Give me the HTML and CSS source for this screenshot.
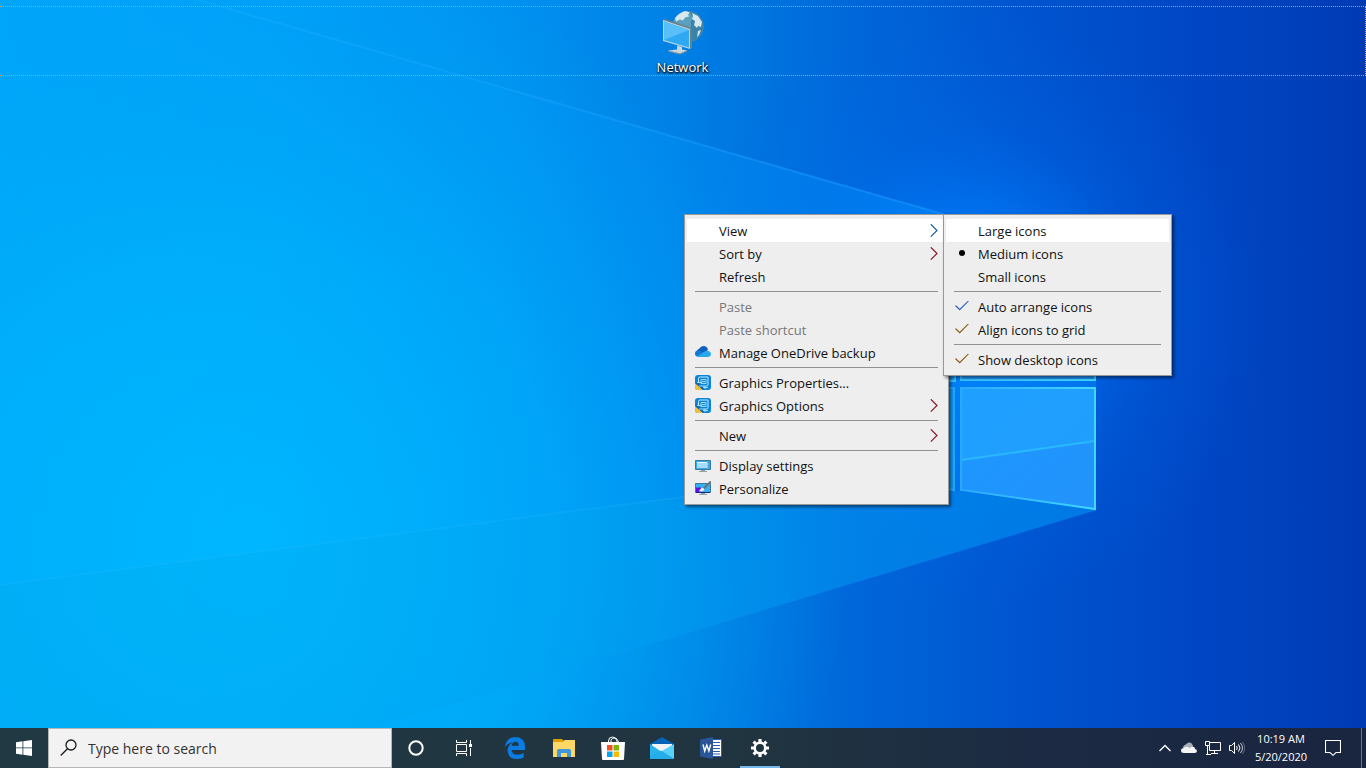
FILE: index.html
```
<!DOCTYPE html>
<html lang="en">
<head>
  <meta charset="UTF-8">
  <meta name="viewport" content="width=device-width, initial-scale=1.0">
  <title>Desktop</title>
  <link rel="stylesheet" href="styles.css">
</head>
<body>

<!-- shared icons -->
<svg class="sprite" aria-hidden="true">
  <symbol id="arrow" viewBox="0 0 8 14">
    <path d="M.8 .3 7 6.500 .8 12.700" fill="none" stroke="currentColor" stroke-width="1.200"/>
  </symbol>
  <symbol id="intel" viewBox="0 0 16 16">
    <rect width="16" height="15" rx="3" fill="#0a84d8"/>
    <path d="M0 8v4q0 3 3 3h5z" fill="#f5c037"/>
    <path d="M8 15 0 8l2-1 7 6z" fill="#1268a8"/>
    <path d="M3.500 8V3.500q0-1.500 1.500-1.500H13v7.500q0 1.500-1.500 1.500H8" fill="none" stroke="#c5ebff"/>
    <path d="M6 4.500h5v4H6zM2 7.500h5M4 11h4M10 11v3M13 12.500H8M7 6.500h3" fill="none" stroke="#9bdcff"/>
  </symbol>
</svg>

<main class="desktop">
  <svg class="wallpaper" viewBox="0 0 1366 728" preserveAspectRatio="none" aria-hidden="true">
    <defs>
      <linearGradient id="base" x1="0" x2="1" y1="0" y2="0">
        <stop offset="0" stop-color="#00a6fb"/>
        <stop offset=".2" stop-color="#009ff9"/>
        <stop offset=".37" stop-color="#0092f0"/>
        <stop offset=".5" stop-color="#007fe4"/>
        <stop offset=".62" stop-color="#0068da"/>
        <stop offset=".75" stop-color="#0054cf"/>
        <stop offset=".88" stop-color="#0046c4"/>
        <stop offset="1" stop-color="#003bb4"/>
      </linearGradient>
      <radialGradient id="cyan" gradientUnits="userSpaceOnUse" cx="250" cy="540" r="600">
        <stop offset="0" stop-color="#00b8ff"/>
        <stop offset=".5" stop-color="#00b2fb" stop-opacity=".7"/>
        <stop offset="1" stop-color="#00a5f0" stop-opacity="0"/>
      </radialGradient>
      <radialGradient id="glow" gradientUnits="userSpaceOnUse" cx="970" cy="310" r="300">
        <stop offset="0" stop-color="#0084ff"/>
        <stop offset=".3" stop-color="#007cfa" stop-opacity=".7"/>
        <stop offset=".6" stop-color="#006ef0" stop-opacity=".25"/>
        <stop offset="1" stop-color="#0062e4" stop-opacity="0"/>
      </radialGradient>
      <linearGradient id="beam" gradientUnits="userSpaceOnUse" x1="150" x2="960" y1="0" y2="0">
        <stop offset="0" stop-color="#00aaff" stop-opacity="0"/>
        <stop offset="1" stop-color="#008cfc" stop-opacity=".75"/>
      </linearGradient>
      <linearGradient id="edge" gradientUnits="userSpaceOnUse" x1="200" x2="960" y1="0" y2="0">
        <stop offset="0" stop-color="#1fb1ff" stop-opacity=".3"/>
        <stop offset="1" stop-color="#1c98ff" stop-opacity=".5"/>
      </linearGradient>
      <linearGradient id="pane" x1="0" x2="1" y1="0" y2="1">
        <stop offset="0" stop-color="#1b98ff"/>
        <stop offset="1" stop-color="#2393fb"/>
      </linearGradient>
      <linearGradient id="rim" x1="0" x2="1" y1="0" y2="0">
        <stop offset="0" stop-color="#2ba8ff"/>
        <stop offset="1" stop-color="#3fd8ff"/>
      </linearGradient>
    </defs>
    <rect width="1366" height="728" fill="url(#base)"/>
    <rect width="1366" height="728" fill="url(#cyan)"/>
    <rect width="1366" height="728" fill="url(#glow)"/>
    <path d="M198 0 1096 258V510L370 728H0V0z" fill="url(#beam)" opacity=".6"/>
    <path d="M198 0 960 219" stroke="url(#edge)" stroke-width="2" fill="none"/>
    <path d="M0 585 955 462V491L1096 510 370 728H0z" fill="#00a8e8" opacity=".2"/>
    <path d="M0 585 955 462" stroke="#35c4ff" stroke-opacity=".15" stroke-width="2" fill="none"/>
    <path d="M1096 510 370 728" stroke="#16a0ff" stroke-opacity=".12" stroke-width="2" fill="none"/>
    <!-- window panes -->
    <path d="M820 275 955 255V381H820zM961 254 1095 232V380H961z" fill="url(#pane)" stroke="url(#rim)" stroke-width="2"/>
    <path d="M820 388H954V490L820 472z" fill="#0f96f2" stroke="#23a6fa" stroke-width="2"/>
    <path d="M961 388H1095V509L961 490z" fill="url(#pane)"/>
    <path d="M961 460 1095 441V388H961z" fill="#22a5ff" opacity=".6"/>
    <path d="M961 460 1095 441" stroke="#2ab8ff" stroke-width="2"/>
    <path d="M961 388H1095V509L961 490z" fill="none" stroke="url(#rim)" stroke-width="2"/>
  </svg>

  <div class="icon-row">
    <a class="desktop-icon" href="#network">
      <svg width="48" height="48" viewBox="0 0 48 48" aria-hidden="true">
        <circle cx="30" cy="19.500" r="15.500" fill="#5a9fbe"/>
        <path d="M30 4a15.500 15.500 0 0 1 15 19.500q-3 9-12 11.400V14q4-4-3-9.500z" fill="#3a82a6"/>
        <path d="M17 11q4-5 10-7l5 1.500-2 2 1 2-4 1-2 3-3-1-4 2zM34 6l6 3 4 6-1 5-3-1-1 2-3-3 1-4-3-2 1-3zM40 24l3-1-2 5-2 2z" fill="#d7e8ee"/>
        <path d="M5 13 7 12 34 21v20l-2 1z" fill="#667f8b"/>
        <path d="M5 13 32 22v20L5 34z" fill="#b9d3df"/>
        <path d="M6 14.500 31 23V40.500L6 33z" fill="#2fa9f3"/>
        <path d="M6 14.500 31 23 6 33z" fill="#58bff9"/>
        <path d="M19 38.500l5 1.500v2.500l5 1-7 3-12-3 9-1z" fill="#cfd6da"/>
        <path d="M10 43.500l12 3 7-3v1L22 47.500 10 44.500z" fill="#8d989e"/>
      </svg>
      <span>Network</span>
    </a>
  </div>

  <div class="menu context-menu">
    <button class="item active">
      <span class="icon"></span>View
      <svg class="arrow blue" width="8" height="14"><use href="#arrow"/></svg>
    </button>
    <button class="item">
      <span class="icon"></span>Sort by
      <svg class="arrow" width="8" height="14"><use href="#arrow"/></svg>
    </button>
    <button class="item"><span class="icon"></span>Refresh</button>
    <hr>
    <button class="item" disabled><span class="icon"></span>Paste</button>
    <button class="item" disabled><span class="icon"></span>Paste shortcut</button>
    <button class="item">
      <svg class="icon" viewBox="0 0 16 16" aria-hidden="true">
        <path d="M2 7Q2 4 4.500 3.500 5.500 1 8.500 1q3.500 0 4.500 3.500L8 10z" fill="#0a5fbd"/>
        <path d="M2.500 11.500Q0 11.500 0 8.500t3-3q3-.5 4.500 1.500L12 11.500z" fill="#1279d3"/>
        <path d="M2 11.500 10 6.200q1-.7 2.500-.5Q16 6.500 16 9t-2.500 3H3z" fill="#28a8ea"/>
      </svg>Manage OneDrive backup
    </button>
    <hr>
    <button class="item"><svg class="icon"><use href="#intel"/></svg>Graphics Properties...</button>
    <button class="item">
      <svg class="icon"><use href="#intel"/></svg>Graphics Options
      <svg class="arrow" width="8" height="14"><use href="#arrow"/></svg>
    </button>
    <hr>
    <button class="item">
      <span class="icon"></span>New
      <svg class="arrow" width="8" height="14"><use href="#arrow"/></svg>
    </button>
    <hr>
    <button class="item">
      <svg class="icon" viewBox="0 0 16 16" aria-hidden="true">
        <path d="M.5 2.500h15v9H.5z" fill="#35aaf0" stroke="#3f7896"/>
        <path d="M2 5h9.500v5H2z" fill="#a8dcff"/>
        <path d="M2 4.500h10V10" fill="none" stroke="#e8f7ff"/>
        <path d="M6 12h4v1H6zM4 13h8v1H4z" fill="#8fa3ad"/>
      </svg>Display settings
    </button>
    <button class="item">
      <svg class="icon" viewBox="0 0 16 16" aria-hidden="true">
        <path d="M.5 2.500h15v9H.5z" fill="#35b2f5" stroke="#3f7896"/>
        <path d="M1 6.500h5v5H1z" fill="#5b12e8"/>
        <path d="M1 11h14v1H1z" fill="#1b2277"/>
        <path d="M4 10.500Q6 6 8.500 7l1 1.500q-1 2.500-5.500 2z" fill="#e9eef0"/>
        <path d="M15.500-.5 8 6.500l1.500 1.800L16.500 1z" fill="#66757d"/>
        <path d="M6 12h4v1H6zM4 13h8v1H4z" fill="#8fa3ad"/>
      </svg>Personalize
    </button>

    <div class="menu submenu">
      <label class="item active"><input type="radio" name="size">Large icons</label>
      <label class="item"><input type="radio" name="size" checked>Medium icons</label>
      <label class="item"><input type="radio" name="size">Small icons</label>
      <hr>
      <label class="item"><input type="checkbox" class="blue" checked>Auto arrange icons</label>
      <label class="item"><input type="checkbox" checked>Align icons to grid</label>
      <hr>
      <label class="item"><input type="checkbox" checked>Show desktop icons</label>
    </div>
  </div>
</main>

<footer class="taskbar">
  <button class="task" aria-label="Start">
    <svg width="16" height="16" viewBox="0 0 16 16" fill="#fff">
      <path d="M0 2.200 6.500 1.300V7.500H0zM7.300 1.200 16 0V7.500H7.300zM0 8.300H6.500V14.700L0 13.800zM7.300 8.300H16V16L7.300 14.800z"/>
    </svg>
  </button>
  <label class="search">
    <svg width="18" height="18" viewBox="0 0 18 18" fill="none" stroke="#1c1c1c" stroke-width="1.300" aria-hidden="true">
      <circle cx="11" cy="6" r="5"/>
      <path d="M7.500 9.700 .7 16.500"/>
    </svg>
    <input type="text" placeholder="Type here to search" aria-label="Search">
  </label>
  <button class="task" aria-label="Cortana">
    <svg width="16" height="16" viewBox="0 0 16 16"><circle cx="8" cy="8" r="6.700" fill="none" stroke="#fff" stroke-width="2"/></svg>
  </button>
  <button class="task" aria-label="Task View">
    <svg width="16" height="16" viewBox="0 0 16 16" fill="none" stroke="#fff">
      <path d="M.5 0v2.500h10V0M.5 16v-2.500h10V16M.5 4.500h10v7H.5zM14.500 0v4M14.500 8v8"/>
      <path d="M13 4h3v3h-3z" fill="#fff" stroke="none"/>
    </svg>
  </button>

  <nav class="pinned">
    <button class="task" aria-label="Edge">
      <svg width="20" height="22" viewBox="0 0 20 22">
        <path d="M0 10Q1.500 0 10.500 0 20 .5 20 10v3H6.500q.5 4.500 6 4.800 3.500 0 6.200-1.800v4.500Q15.500 22 12 22 3 22 2.500 13.500 2.500 8.500 7.500 5.500 3 6 0 10zM6.700 8.800h7q0-4-3.300-4-3 .2-3.700 4z" fill="#0a7be0"/>
      </svg>
    </button>
    <button class="task" aria-label="File Explorer">
      <svg width="22" height="18" viewBox="0 0 22 18">
        <path d="M0 1q0-1 1-1h8l2 2v2H0z" fill="#e0a000"/>
        <path d="M0 3h10l1.500-2H22v17H0z" fill="#ffd766"/>
        <path d="M4 18v-6q0-2 2-2h10q2 0 2 2v6h-4v-4H8v4z" fill="#3f97dc"/>
      </svg>
    </button>
    <button class="task" aria-label="Store">
      <svg width="24" height="24" viewBox="0 0 24 24">
        <path d="M7.500 7V5q0-4 4-4 3.500 0 4.500 4v2M10 7V4q1-2 3-2 4 0 4.500 5" fill="none" stroke="#fff"/>
        <path d="M0 6h24l-1 17q0 1-1 1H2q-1 0-1-1z" fill="#fff"/>
        <path d="M6 9h5.500v5.500H6z" fill="#f25022"/>
        <path d="M12.500 9H18v5.500h-5.500z" fill="#7fba00"/>
        <path d="M6 15.500h5.500V21H6z" fill="#00a4ef"/>
        <path d="M12.500 15.500H18V21h-5.500z" fill="#ffb900"/>
      </svg>
    </button>
    <button class="task" aria-label="Mail">
      <svg width="24" height="22" viewBox="0 0 24 22">
        <path d="M0 7 12 0l12 7v4H0z" fill="#0663b8"/>
        <path d="M2 7h20v3L12 17 2 9z" fill="#f1f3f5"/>
        <path d="M0 7 11 14.500 0 22z" fill="#28b5ee"/>
        <path d="M24 7v15L11 14.500z" fill="#58d2f8"/>
        <path d="M0 22V19L11 13.500 24 22z" fill="#25adeb"/>
      </svg>
    </button>
    <button class="task" aria-label="Word">
      <svg width="22" height="22" viewBox="0 0 22 22">
        <path d="M12 2.500h9.500v17H12z" fill="#fff" stroke="#2b5eb0"/>
        <path d="M13 5.500h7M13 8.500h7M13 11.500h7M13 14.500h7M13 17h7" stroke="#2b5eb0"/>
        <path d="M0 2.500 13 0v22L0 19.500z" fill="#2a5699"/>
        <path d="M3 7.500 4.700 14 6.800 8 8.900 14 10.700 7.500" fill="none" stroke="#fff" stroke-width="1.400"/>
      </svg>
    </button>
    <button class="task running" aria-label="Settings">
      <svg width="18" height="18" viewBox="-9 -9 18 18" stroke="#fff" fill="none">
        <circle r="5.300" stroke-width="2.600"/>
        <path d="M0-9v3M0 9V6M-9 0h3M9 0H6M-6.400-6.400l2 2M6.400 6.400l-2-2M-6.400 6.400l2-2M6.400-6.400l-2 2" stroke-width="3.200"/>
      </svg>
    </button>
  </nav>

  <div class="tray">
    <button class="tray-icon" aria-label="Show hidden icons">
      <svg width="12" height="8" viewBox="0 0 12 8" fill="none" stroke="#fff" stroke-width="1.300"><path d="M.5 7 6 1.500 11.500 7"/></svg>
    </button>
    <button class="tray-icon" aria-label="OneDrive">
      <svg width="16" height="12" viewBox="0 0 16 12">
        <path d="M2 6q0-3 3-3.500Q6.500 0 9 .5q2.500.5 3 3.500L9 8z" fill="#a9afb8"/>
        <path d="M3 11q-3 0-3-2.500T3 6q1-2 3.500-1Q8 5.500 9 6q1.500-2.500 4-1 1 .7 1 2 2 .3 2 2 0 2-2.500 2z" fill="#f4f4f4"/>
      </svg>
    </button>
    <button class="tray-icon" aria-label="Network">
      <svg width="16" height="14" viewBox="0 0 16 14" fill="none" stroke="#fff">
        <path d="M5 1.500h10.500v8H4.500V5M.5 .5h4v4h-4zM2.500 4.500v9M9.500 9.500v3M6 12.500h7M1 13.500h5"/>
      </svg>
    </button>
    <button class="tray-icon" aria-label="Volume">
      <svg width="16" height="14" viewBox="0 0 16 14" fill="none" stroke="#fff">
        <path d="M.5 4.500h2l3-3v11l-3-3h-2zM7.500 5q1.500 2 0 4M9.500 3.500q3 3.500 0 7"/>
        <path d="M11.500 2q4 5 0 10" stroke="#c3c8d2"/>
        <path d="M13.500 1q4.500 6 0 12" stroke="#5f687c"/>
      </svg>
    </button>
    <button class="clock"><span>10:19 AM</span><span>5/20/2020</span></button>
    <button class="action-center" aria-label="Action center">
      <svg width="16" height="16" viewBox="0 0 16 16" fill="none" stroke="#fff" stroke-width="1.100"><path d="M.5 .5h15v12H11L8 15.300 5 12.500H.5z"/></svg>
    </button>
    <button class="show-desktop" aria-label="Show desktop"></button>
  </div>
</footer>

</body>
</html>
```
FILE: styles.css
```
* {
  box-sizing: border-box;
}
body {
  margin: 0;
  height: 100vh;
  display: flex;
  flex-direction: column;
  overflow: hidden;
  font-family: "Open Sans", "Noto Sans", sans-serif;
  font-size: 13px;
  color: #111;
}
button, input {
  font: inherit;
  color: inherit;
  border: none;
  background: none;
  padding: 0;
  margin: 0;
}
svg {
  display: block;
  flex-shrink: 0;
}
.sprite {
  position: absolute;
  width: 0;
  height: 0;
}

/* desktop */
.desktop {
  position: relative;
  flex: 1;
  padding-top: 6px;
}
.wallpaper {
  position: absolute;
  top: 0;
  left: 0;
  width: 100%;
  height: 100%;
}
.icon-row {
  position: relative;
  display: flex;
  justify-content: center;
  height: 70px;
  border: 1px dotted #ff8c2a;
  border-left: none;
}
.desktop-icon {
  display: flex;
  flex-direction: column;
  align-items: center;
  gap: 4px;
  color: #fff;
  line-height: 16px;
  text-decoration: none;
  text-shadow: 1px 1px 2px #000, 0 1px 2px #000;
}

/* menus */
.menu {
  position: absolute;
  padding: 4px 2px;
  background: #eee;
  border: 1px solid #999;
  box-shadow: 2px 2px 3px rgba(0,0,0,0.5);
}
.context-menu {
  top: 214px;
  left: calc(50% + 1px);
  width: 265px;
}
.submenu {
  top: -1px;
  left: 100%;
  margin-left: -5px;
  width: 229px;
}
.item {
  display: flex;
  align-items: center;
  gap: 8px;
  width: 100%;
  height: 23px;
  padding: 0 8px;
  text-align: left;
  white-space: nowrap;
}
.item.active {
  background: #fff;
}
.item:disabled {
  color: #777;
}
.icon {
  width: 16px;
  height: 16px;
  flex-shrink: 0;
}
.arrow {
  margin-left: auto;
  color: #8c1c28;
}
.arrow.blue {
  color: #1a5f9c;
}
.menu hr {
  margin: 3px 8px;
  border: none;
  border-top: 1px solid #919191;
}
.item input {
  appearance: none;
  display: grid;
  justify-items: center;
  align-items: start;
  width: 16px;
  height: 16px;
}
.item input[type="radio"]:checked::before {
  content: "";
  width: 6px;
  height: 6px;
  margin-top: 4px;
  border-radius: 50%;
  background: #000;
}
.item input[type="checkbox"]:checked::before {
  content: "";
  width: 14px;
  height: 10px;
  margin-top: 2px;
  background: #8a5a10;
  clip-path: polygon(0 55%, 7% 47%, 34% 82%, 94% 0, 100% 5%, 34% 100%);
}
.item input.blue:checked::before {
  background: #2a5fb8;
}

/* taskbar */
.taskbar {
  display: flex;
  height: 40px;
  background: linear-gradient(to right, #213943, #203440 55%, #1b2943 80%, #1a2540);
  color: #fff;
}
.task {
  display: flex;
  align-items: center;
  justify-content: center;
  width: 48px;
}
.search {
  display: flex;
  align-items: center;
  gap: 10px;
  width: 344px;
  padding: 0 11px;
  background: #f2f2f2;
  border: 1px solid #b5b5b5;
}
.search input {
  flex: 1;
  font-size: 14px;
  outline: none;
}
.search input::placeholder {
  color: #333;
}
.pinned {
  display: flex;
  gap: 1px;
  margin-left: 3px;
}
.running {
  background: linear-gradient(#76b9ed, #76b9ed) bottom / 40px 2px no-repeat;
}
.tray {
  display: flex;
  margin-left: auto;
}
.tray-icon {
  display: flex;
  align-items: center;
  justify-content: center;
  width: 24px;
}
.clock {
  display: flex;
  flex-direction: column;
  justify-content: center;
  width: 64px;
  font-size: 11px;
  line-height: 18px;
  text-align: center;
}
.action-center {
  display: flex;
  align-items: center;
  justify-content: center;
  width: 40px;
}
.show-desktop {
  width: 5px;
  margin-left: 8px;
  border-left: 1px solid #6d7688;
}
```
